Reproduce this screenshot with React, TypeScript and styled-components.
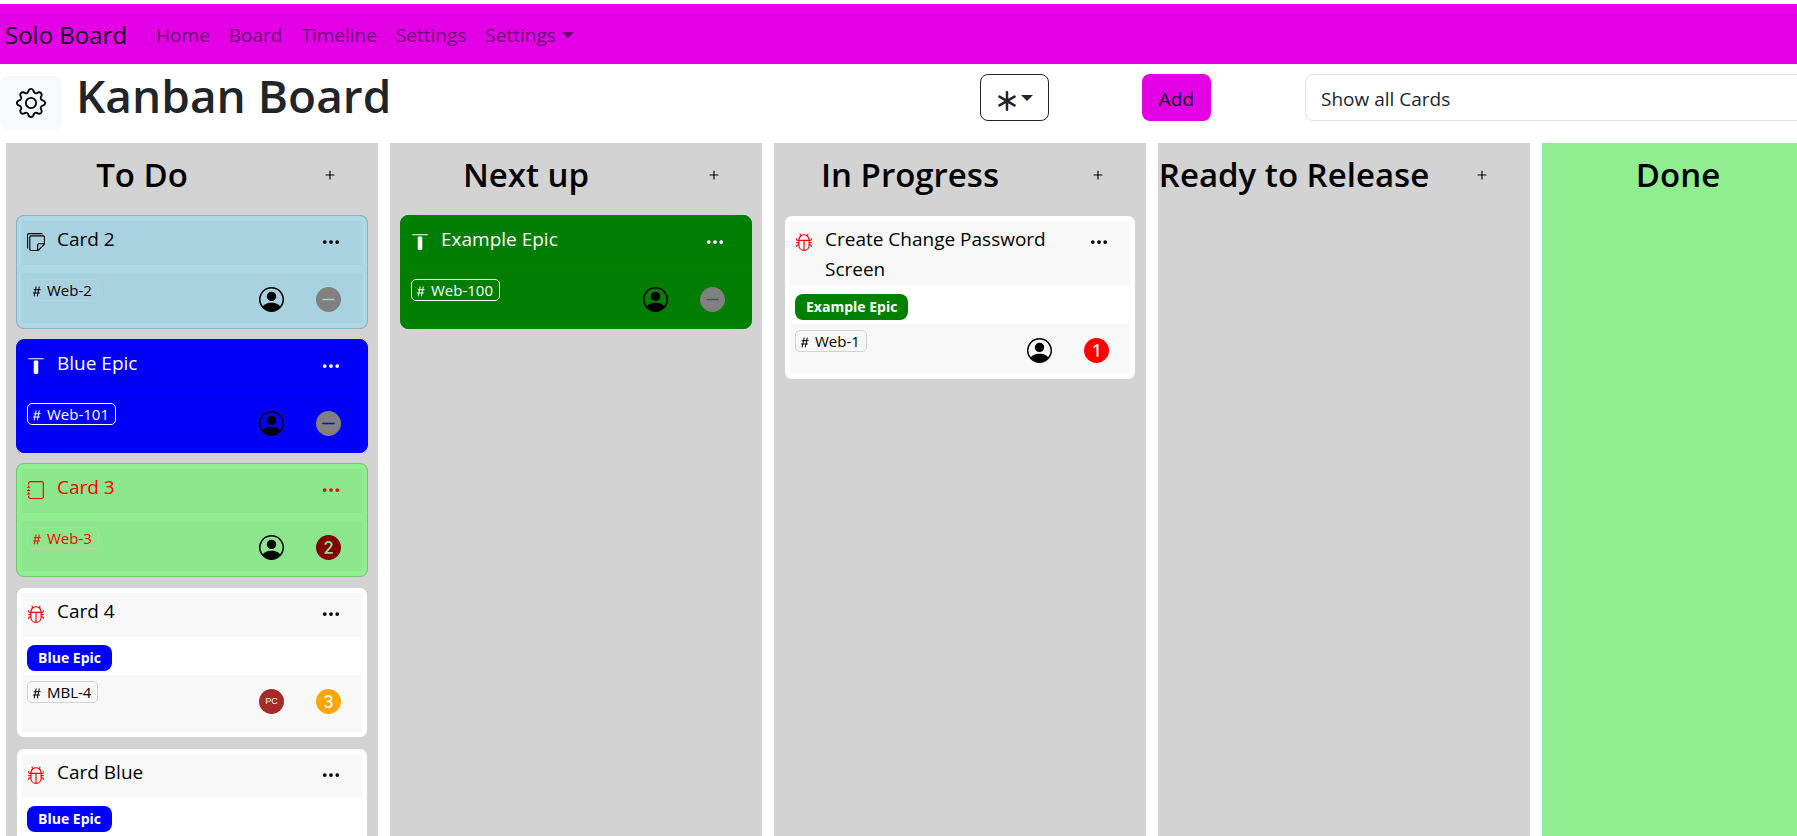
import React from "react";
import styled, { createGlobalStyle } from "styled-components";
import {
  BsGear, BsStickies, BsAlignTop, BsJournal, BsBug, BsThreeDots, BsHash, BsPersonCircle,
  BsDashCircleFill, Bs1CircleFill, Bs2CircleFill, Bs3CircleFill, BsAsterisk, BsPlus,
} from "react-icons/bs";

const GlobalStyle = createGlobalStyle`
  *, *::before, *::after { box-sizing: border-box; }
  body {
    margin: 0;
    background: #fff;
    color: #212529;
    font-family: "Open Sans", "Noto Sans", sans-serif;
    font-size: 19px;
    line-height: 30px;
    overflow: hidden;
  }
  h1, h2, h3, p { margin: 0; }
  button, select { font: inherit; color: inherit; }
`;

const Page = styled.div`
  height: 100vh;
  padding-top: 4px;
  display: flex;
  flex-direction: column;
  overflow: hidden;
`;

const Navbar = styled.nav`
  flex: none;
  height: 60px;
  padding: 0 5px 7px;
  display: flex;
  align-items: center;
  background: #e400e4;
  border-top: 9px solid #ec00e6;
`;

const Brand = styled.a`
  margin-right: 29px;
  font-size: 24px;
  color: #14001a;
  text-decoration: none;
`;

const NavLinks = styled.div`
  display: flex;
  gap: 19px;
`;

const NavLink = styled.a`
  display: flex;
  align-items: center;
  gap: 6px;
  color: #6d0078;
  text-decoration: none;
`;

const Caret = styled.span`
  width: 0;
  border: 6px solid transparent;
  border-top-color: currentColor;
  border-bottom: 0;
`;

const Toolbar = styled.header`
  flex: none;
  height: 79px;
  display: flex;
  align-items: flex-start;
`;

const GearButton = styled.button`
  flex: none;
  width: 62px;
  height: 54px;
  margin: 12px 0 0;
  padding: 0;
  display: grid;
  place-items: center;
  border: 0;
  border-radius: 8px;
  background: #f8f9fa;
  color: #000;
  font-size: 30px;
`;

const Title = styled.h1`
  flex: 1;
  padding-left: 14px;
  font-size: 46px;
  line-height: 62px;
  font-weight: 600;
`;

const Controls = styled.div`
  flex: none;
  width: 817px;
  padding-top: 10px;
  display: flex;
  align-items: center;
`;

const OutlineButton = styled.button`
  width: 69px;
  height: 47px;
  margin-right: 93px;
  padding: 6px 0 0;
  display: flex;
  align-items: center;
  justify-content: center;
  gap: 4px;
  border: 1px solid #212529;
  border-radius: 8px;
  background: #fff;

  svg { font-size: 20px; }
  span { margin-bottom: 6px; }
`;

const AddButton = styled.button`
  width: 69px;
  height: 47px;
  margin-right: 94px;
  padding: 2px 0 0;
  border: 0;
  border-radius: 8px;
  background: #e400e4;
  color: #14001a;
`;

const Filter = styled.select`
  flex: 1;
  height: 47px;
  margin-right: -40px;
  padding: 2px 15px 0;
  border: 1px solid #dee2e6;
  border-radius: 8px;
  background: #fff;
  appearance: none;
`;

const Board = styled.main`
  flex: 1;
  min-height: 0;
  padding-left: 6px;
  display: flex;
  gap: 12px;
`;

const Column = styled.section<{ $done?: boolean }>`
  flex: none;
  width: 372px;
  background: ${(p) => (p.$done ? "#90ee90" : "#d3d3d3")};
  color: #000;
`;

const ColumnHead = styled.header`
  height: 72px;
  padding-bottom: 8px;
  display: grid;
  grid-template-columns: 272px 1fr;
  align-items: center;
`;

const ColumnTitle = styled.h2`
  font-size: 33px;
  line-height: 40px;
  font-weight: 600;
  text-align: center;
  white-space: nowrap;
`;

const PlusButton = styled.button`
  justify-self: center;
  padding: 0 0 0 3px;
  border: 0;
  background: none;
  display: grid;
  font-size: 18px;
`;

const CardList = styled.div`
  padding: 0 10px;
  display: flex;
  flex-direction: column;
  gap: 10px;
`;

const cardEdge = (bg: string, fg: string) => {
  if (bg === "#ffffff") return "#d3d3d3";
  return fg === "#ffffff" ? bg : "rgba(0, 0, 0, 0.175)";
};

const CardBox = styled.article<{ $bg: string; $fg: string }>`
  padding: 5px;
  border: 1px solid ${(p) => cardEdge(p.$bg, p.$fg)};
  border-radius: 8px;
  background: ${(p) => p.$bg};
  color: ${(p) => p.$fg};
`;

const CardHead = styled.div`
  min-height: 44px;
  padding: 3px 21px 2px 5px;
  display: flex;
  align-items: flex-start;
  background: rgba(33, 37, 41, 0.03);
`;

const KindIcon = styled.span<{ $color?: string }>`
  flex: none;
  width: 30px;
  padding-top: 9px;
  font-size: 18px;
  line-height: 18px;
  color: ${(p) => p.$color ?? "inherit"};

  svg { display: block; }
`;

const CardTitle = styled.h3`
  flex: 1;
  font-size: 19px;
  font-weight: 400;
`;

const MoreButton = styled.button`
  flex: none;
  padding: 8px 0 0;
  margin-left: 20px;
  border: 0;
  background: none;
  display: grid;
  font-size: 20px;
`;

const CardBody = styled.div`
  min-height: 8px;
  padding: 0 5px;
  display: flex;
`;

const EpicBadge = styled.span<{ $bg: string }>`
  height: 26px;
  margin: 8px 0 4px;
  padding: 0 11px;
  border-radius: 8px;
  background: ${(p) => p.$bg};
  color: #fff;
  font-size: 14px;
  line-height: 26px;
  font-weight: 700;
`;

const CardFoot = styled.div<{ $tall?: boolean }>`
  height: ${(p) => (p.$tall ? 57 : 50)}px;
  padding: 0 21px 0 5px;
  display: flex;
  align-items: flex-start;
  background: rgba(33, 37, 41, 0.03);
`;

const IdTag = styled.span<{ $line: string }>`
  height: 22px;
  margin-top: 6px;
  padding: 0 6px 0 1px;
  display: flex;
  align-items: center;
  gap: 3px;
  border: 1px solid ${(p) => p.$line};
  border-radius: 5px;
  font-size: 15px;
  line-height: 20px;

  svg { margin-top: 3px; font-size: 15px; }
`;

const Marks = styled.div`
  margin: 14px 0 0 auto;
  display: flex;
  gap: 32px;
  font-size: 25px;

  svg { display: block; }
`;

const Avatar = styled.span`
  width: 25px;
  height: 25px;
  border-radius: 50%;
  background: brown;
  color: #fff;
  font: 9px/25px "Liberation Sans", sans-serif;
  text-align: center;
`;

type Kind = "stickies" | "epic" | "journal" | "bug";
interface Item {
  title: string;
  id: string;
  kind: Kind;
  bg: string;
  fg: string;
  line?: string;
  priority: 0 | 1 | 2 | 3;
  epic?: { name: string; color: string };
  initials?: string;
}

const kinds = { stickies: BsStickies, epic: BsAlignTop, journal: BsJournal, bug: BsBug };
const priorities = [
  { Icon: BsDashCircleFill, color: "gray" },
  { Icon: Bs1CircleFill, color: "red" },
  { Icon: Bs2CircleFill, color: "maroon" },
  { Icon: Bs3CircleFill, color: "orange" },
];

const blueEpic = { name: "Blue Epic", color: "#0000ff" };
const greenEpic = { name: "Example Epic", color: "#008000" };
const white = "#ffffff";

const columns: { name: string; done?: boolean; items: Item[] }[] = [
  {
    name: "To Do",
    items: [
      { title: "Card 2", id: "Web-2", kind: "stickies", bg: "#add8e6", fg: "#000000", line: "#b8d3dc", priority: 0 },
      { title: "Blue Epic", id: "Web-101", kind: "epic", bg: "#0000ff", fg: white, line: white, priority: 0 },
      { title: "Card 3", id: "Web-3", kind: "journal", bg: "#90ee90", fg: "#ff0000", line: "#a8dca8", priority: 2 },
      { title: "Card 4", id: "MBL-4", kind: "bug", bg: white, fg: "#000000", priority: 3, epic: blueEpic, initials: "PC" },
      { title: "Card Blue", id: "MBL-5", kind: "bug", bg: white, fg: "#000000", priority: 3, epic: blueEpic },
    ],
  },
  { name: "Next up", items: [{ title: "Example Epic", id: "Web-100", kind: "epic", bg: "#008000", fg: white, line: white, priority: 0 }] },
  {
    name: "In Progress",
    items: [{ title: "Create Change Password Screen", id: "Web-1", kind: "bug", bg: white, fg: "#000000", priority: 1, epic: greenEpic }],
  },
  { name: "Ready to Release", items: [] },
  { name: "Done", done: true, items: [] },
];

function Card({ item }: { item: Item }) {
  const Icon = kinds[item.kind];
  const { Icon: Priority, color } = priorities[item.priority];
  return (
    <CardBox $bg={item.bg} $fg={item.fg}>
      <CardHead>
        <KindIcon $color={item.kind === "bug" ? "red" : undefined}><Icon /></KindIcon>
        <CardTitle>{item.title}</CardTitle>
        <MoreButton aria-label={`Options for ${item.title}`}><BsThreeDots /></MoreButton>
      </CardHead>
      <CardBody>
        {item.epic && <EpicBadge $bg={item.epic.color}>{item.epic.name}</EpicBadge>}
      </CardBody>
      <CardFoot $tall={Boolean(item.initials)}>
        <IdTag $line={item.line ?? "#d3d3d3"}><BsHash />{item.id}</IdTag>
        <Marks>
          {item.initials ? <Avatar>{item.initials}</Avatar> : <BsPersonCircle color="#000" />}
          <Priority color={color} />
        </Marks>
      </CardFoot>
    </CardBox>
  );
}

export default function App() {
  return (
    <Page>
      <GlobalStyle />
      <Navbar>
        <Brand href="#">Solo Board</Brand>
        <NavLinks>
          <NavLink href="#home">Home</NavLink>
          <NavLink href="#board">Board</NavLink>
          <NavLink href="#timeline">Timeline</NavLink>
          <NavLink href="#settings">Settings</NavLink>
          <NavLink href="#more">Settings<Caret /></NavLink>
        </NavLinks>
      </Navbar>
      <Toolbar>
        <GearButton aria-label="Board settings"><BsGear /></GearButton>
        <Title>Kanban Board</Title>
        <Controls>
          <OutlineButton aria-label="Card type"><BsAsterisk /><Caret /></OutlineButton>
          <AddButton>Add</AddButton>
          <Filter aria-label="Filter cards"><option>Show all Cards</option></Filter>
        </Controls>
      </Toolbar>
      <Board>
        {columns.map((c) => (
          <Column key={c.name} $done={c.done}>
            <ColumnHead>
              <ColumnTitle>{c.name}</ColumnTitle>
              <PlusButton aria-label={`Add card to ${c.name}`}><BsPlus /></PlusButton>
            </ColumnHead>
            <CardList>{c.items.map((i) => <Card key={i.id} item={i} />)}</CardList>
          </Column>
        ))}
      </Board>
    </Page>
  );
}
